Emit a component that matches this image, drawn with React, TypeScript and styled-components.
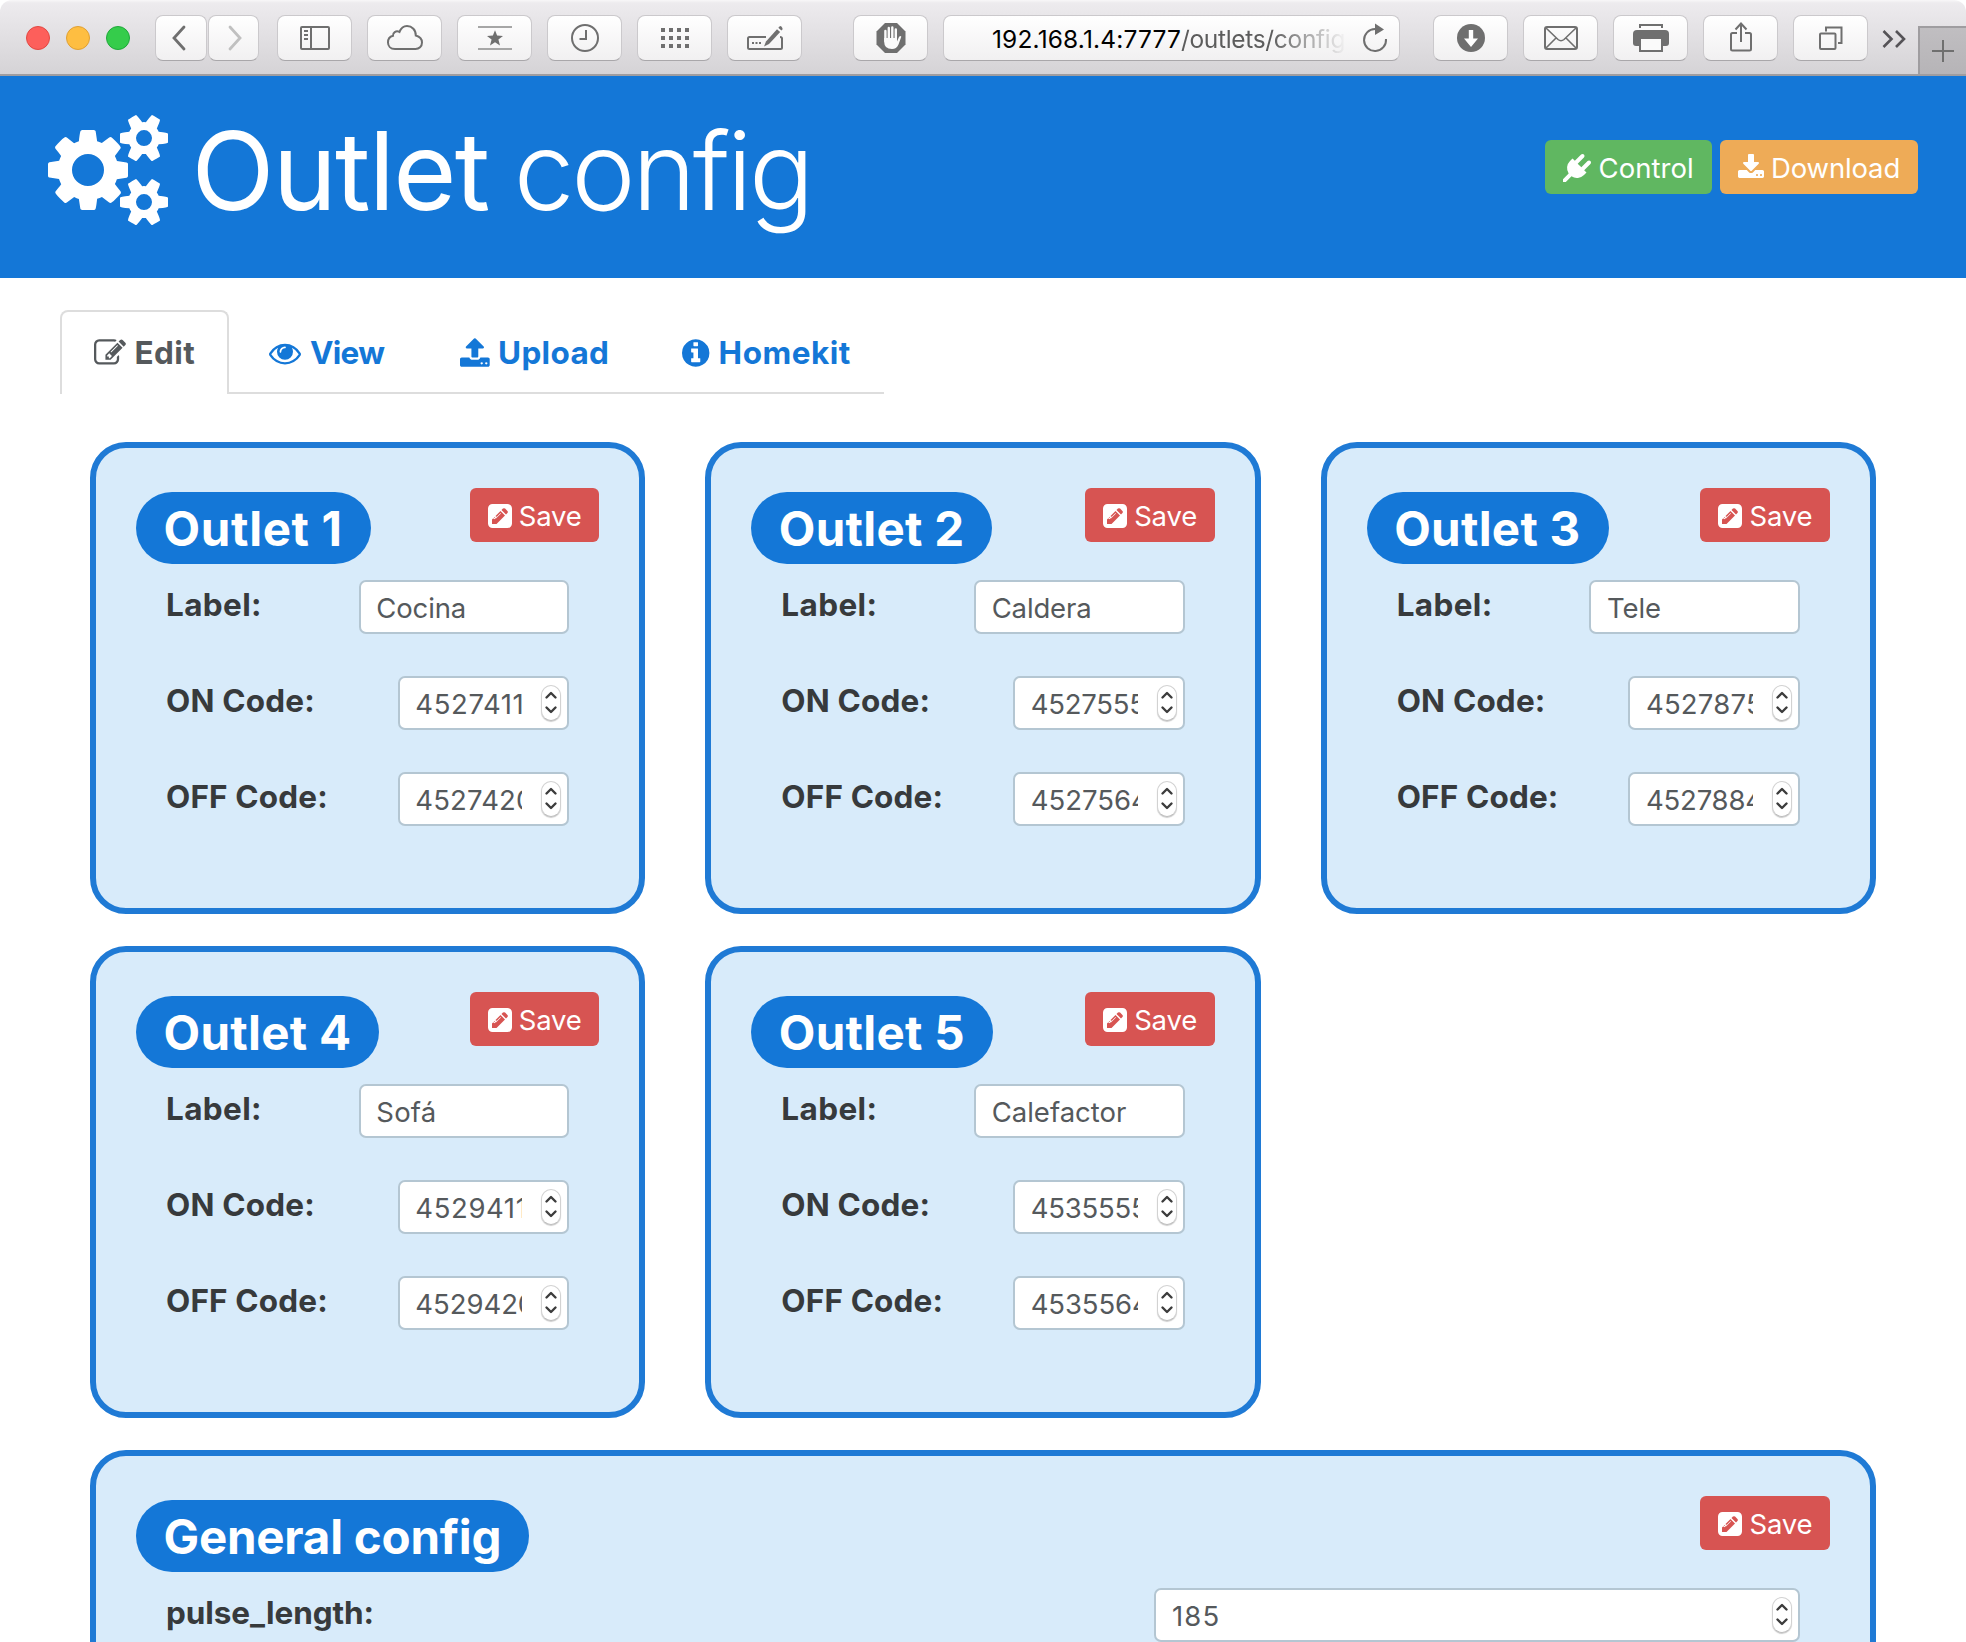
import React from 'react';
import styled, { createGlobalStyle, css } from 'styled-components';

const blue = '#1477d7';
const ink = '#373a3c';
const grey = '#6f6f6f';

const GlobalStyle = createGlobalStyle`
  *, *::before, *::after { box-sizing: border-box; }
  body {
    margin: 0;
    background: #fff;
    color: ${ink};
    font-family: Inter, "Open Sans", "Liberation Sans", sans-serif;
  }
`;

const Window = styled.div`
  width: 1966px;
  height: 1642px;
  overflow: hidden;
  background: #fff;
`;

/* ---------- Browser toolbar ---------- */

const Toolbar = styled.div`
  display: flex;
  align-items: flex-start;
  height: 76px;
  padding: 15px 0 0 26px;
  border-bottom: 2px solid #9f9da0;
  border-radius: 12px 12px 0 0;
  background: linear-gradient(#f8f7f8 0, #edebee 3px, #d5d3d6 100%);
`;

const Lights = styled.div`
  display: flex;
  gap: 16px;
  padding-top: 11px;
`;

const Light = styled.span<{ $fill: string; $edge: string }>`
  width: 24px;
  height: 24px;
  border-radius: 50%;
  border: 1px solid ${(p) => p.$edge};
  background: ${(p) => p.$fill};
`;

const Group = styled.div<{ $before: number; $gap?: number }>`
  display: flex;
  gap: ${(p) => p.$gap ?? 15}px;
  margin-left: ${(p) => p.$before}px;
`;

const chromeFace = css`
  height: 46px;
  border: 1px solid #cbc9cc;
  border-bottom-color: #a9a7aa;
  border-radius: 8px;
  background: linear-gradient(#ffffff, #f1f0f1);
`;

const ToolButton = styled.button<{ $width?: number }>`
  ${chromeFace}
  display: flex;
  align-items: center;
  justify-content: center;
  width: ${(p) => p.$width ?? 75}px;
  padding: 0;
`;

const Glyph = styled.svg`
  flex: none;
  display: block;
  width: 44px;
  height: 36px;
  fill: none;
  stroke: ${grey};
  stroke-width: 2;
`;

const AddressBar = styled.div`
  ${chromeFace}
  display: flex;
  width: 457px;
  margin-left: 15px;
  padding: 1px 2px 0 48px;
  font-size: 24.5px;
  line-height: 44px;
  white-space: nowrap;
`;

const Host = styled.span`
  color: #000;
  letter-spacing: 0.15px;
`;

const Path = styled.span`
  width: 166px;
  overflow: hidden;
  color: #5c5c5c;
  letter-spacing: -0.32px;
  mask-image: linear-gradient(to right, #000 90px, transparent 100%);
`;

const Reload = styled(Glyph)`
  margin: 3px 0 0 auto;
`;

const Overflow = styled.svg`
  display: block;
  width: 26px;
  height: 46px;
  margin-left: 13px;
  fill: none;
  stroke: #555357;
  stroke-width: 2.6;
`;

const NewTab = styled.button`
  display: flex;
  align-items: center;
  justify-content: center;
  align-self: flex-end;
  width: 48px;
  height: 48px;
  margin-left: auto;
  padding: 0;
  border: 2px solid #9f9da0;
  border-width: 2px 0 0 2px;
  background: linear-gradient(#c0bec1, #b6b4b7);
`;

/* ---------- Page header ---------- */

const Banner = styled.header`
  display: flex;
  justify-content: space-between;
  height: 202px;
  padding: 30px 48px 0;
  background: ${blue};
  color: #fff;
`;

const Title = styled.h1`
  margin: 0;
  font-size: 108.5px;
  line-height: 129px;
  font-weight: 430;
  letter-spacing: -1.8px;
  white-space: nowrap;
`;

const TitleLight = styled.span`
  margin-left: 25.5px;
  font-weight: 320;
  letter-spacing: -3.3px;
`;

const Actions = styled.div`
  display: flex;
  gap: 8px;
  padding-top: 34px;
`;

const Button = styled.button<{ $color: string; $width: number; $track?: number }>`
  flex: none;
  width: ${(p) => p.$width}px;
  height: 54px;
  padding: 3px 0 0 18px;
  border: 0;
  border-radius: 6px;
  background: ${(p) => p.$color};
  color: #fff;
  font: 430 27.5px/51px Inter, sans-serif;
  letter-spacing: ${(p) => p.$track ?? -0.2}px;
  text-align: left;
  white-space: nowrap;
`;

const FaSvg = styled.svg<{ $size: number; $advance: number; $after: number }>`
  display: inline-block;
  width: ${(p) => (p.$size * p.$advance) / 1792}px;
  height: ${(p) => p.$size}px;
  margin-right: ${(p) => p.$after}px;
  vertical-align: ${(p) => -p.$size / 7}px;
  fill: currentColor;
  overflow: visible;
`;

/* ---------- Tabs ---------- */

const TabBar = styled.nav`
  display: flex;
  gap: 6.4px;
  width: 824px;
  height: 84px;
  margin: 32px 0 0 60px;
  border-bottom: 2px solid #ddd;
`;

const Tab = styled.a<{ $width: number; $track: number; $active?: boolean }>`
  flex: none;
  width: ${(p) => p.$width}px;
  height: 84px;
  padding: 17px 0 0 32px;
  border: 2px solid transparent;
  border-bottom: 0;
  border-radius: 8px 8px 0 0;
  color: ${blue};
  font-size: 31.5px;
  line-height: 48px;
  font-weight: 700;
  letter-spacing: ${(p) => p.$track}px;
  white-space: nowrap;
  ${(p) =>
    p.$active &&
    css`
      border-color: #ddd;
      background: #fff;
      color: #55595c;
    `}
`;

/* ---------- Cards ---------- */

const Cards = styled.main`
  display: grid;
  grid-template-columns: repeat(3, 1fr);
  grid-auto-rows: 472px;
  gap: 32px 60px;
  padding: 48px 90px 0;
`;

const Card = styled.section<{ $wide?: boolean }>`
  grid-column: ${(p) => (p.$wide ? '1 / -1' : 'auto')};
  padding: 40px;
  border: 6px solid #1f7ad5;
  border-radius: 36px;
  background: #d8ebfa;
`;

const CardHead = styled.div`
  display: flex;
  justify-content: space-between;
  align-items: flex-start;
  height: 92px;
`;

const Pill = styled.h2<{ $track: number }>`
  height: 72px;
  margin: 4px 0 0;
  padding: 2px 28px 0 27.5px;
  border-radius: 36px;
  background: ${blue};
  color: #fff;
  font-size: 47.5px;
  line-height: 70px;
  font-weight: 700;
  letter-spacing: ${(p) => p.$track}px;
  white-space: nowrap;
`;

const FieldRow = styled.div`
  display: flex;
  justify-content: space-between;
  height: 96px;
  padding: 0 30px;
`;

const FieldName = styled.label<{ $track: number }>`
  font-size: 31.5px;
  line-height: 50px;
  font-weight: 700;
  letter-spacing: ${(p) => p.$track}px;
`;

const Box = styled.div<{ $width: number }>`
  display: flex;
  width: ${(p) => p.$width}px;
  height: 54px;
  padding: 0 6px 0 15.5px;
  border: 2px solid #b4c6d2;
  border-radius: 7px;
  background: #fff;
`;

const Value = styled.span<{ $track: number }>`
  flex: 1;
  min-width: 0;
  padding-top: 3px;
  overflow: hidden;
  color: #55595c;
  font-size: 27.5px;
  line-height: 47px;
  letter-spacing: ${(p) => p.$track}px;
  white-space: nowrap;
`;

const Stepper = styled.span`
  flex: none;
  width: 20px;
  height: 36px;
  margin: 7px 0 0 19px;
  border: 1px solid #d2d2d2;
  border-bottom-color: #bdbdbd;
  border-radius: 10px;
  background: #fff;
  box-shadow: 0 1px 1px rgba(0, 0, 0, 0.2);
`;

const StepperArrows = styled.svg`
  display: block;
  width: 18px;
  height: 34px;
  fill: none;
  stroke: #3c3c3c;
  stroke-width: 2.4;
  stroke-linecap: round;
  stroke-linejoin: round;
`;

/* ---------- Icon shapes ---------- */

const shapes = {
  cogs: {
    advance: 1920,
    d: 'M896 896q0-106-75-181t-181-75-181 75-75 181 75 181 181 75 181-75 75-181zm768 512q0-52-38-90t-90-38-90 38-38 90q0 53 37.5 90.5t90.5 37.5 90.5-37.5 37.5-90.5zm0-1024q0-52-38-90t-90-38-90 38-38 90q0 53 37.5 90.5t90.5 37.5 90.5-37.5 37.5-90.5zm-384 421v185q0 10-7 19.5t-16 10.5l-155 24q-11 35-32 76 34 48 90 115 7 11 7 20 0 12-7 19-23 30-82.5 89.5t-78.5 59.5q-11 0-21-7l-115-90q-37 19-77 31-11 108-23 155-7 24-30 24h-186q-11 0-20-7.5t-10-17.5l-23-153q-34-10-75-31l-118 89q-7 7-20 7-11 0-21-8-144-133-144-160 0-9 7-19 10-14 41-53t47-61q-23-44-35-82l-152-24q-10-1-17-9.5t-7-19.5v-185q0-10 7-19.5t16-10.5l155-24q11-35 32-76-34-48-90-115-7-11-7-20 0-12 7-20 22-30 82-89t79-59q11 0 21 7l115 90q34-18 77-32 11-108 23-154 7-24 30-24h186q11 0 20 7.5t10 17.5l23 153q34 10 75 31l118-89q8-7 20-7 11 0 21 8 144 133 144 160 0 8-7 19-12 16-42 54t-45 60q23 48 34 82l152 23q10 2 17 10.5t7 19.5zm640 533v140q0 16-149 31-12 27-30 52 51 113 51 138 0 4-4 7-122 71-124 71-8 0-46-47t-52-68q-20 2-30 2t-30-2q-14 21-52 68t-46 47q-2 0-124-71-4-3-4-7 0-25 51-138-18-25-30-52-149-15-149-31v-140q0-16 149-31 13-29 30-52-51-113-51-138 0-4 4-7 4-2 35-20t59-34 30-16q8 0 46 46.5t52 67.5q20-2 30-2t30 2q51-71 92-112l6-2q4 0 124 70 4 3 4 7 0 25-51 138 17 23 30 52 149 15 149 31zm0-1024v140q0 16-149 31-12 27-30 52 51 113 51 138 0 4-4 7-122 71-124 71-8 0-46-47t-52-68q-20 2-30 2t-30-2q-14 21-52 68t-46 47q-2 0-124-71-4-3-4-7 0-25 51-138-18-25-30-52-149-15-149-31v-140q0-16 149-31 13-29 30-52-51-113-51-138 0-4 4-7 4-2 35-20t59-34 30-16q8 0 46 46.5t52 67.5q20-2 30-2t30 2q51-71 92-112l6-2q4 0 124 70 4 3 4 7 0 25-51 138 17 23 30 52 149 15 149 31z',
  },
  plug: {
    advance: 1792,
    d: 'M1755 453q37 38 37 90.5t-37 90.5l-401 400 150 150-160 160q-163 163-389.5 186.5t-411.5-100.5l-362 362h-181v-181l362-362q-124-185-100.5-411.5t186.5-389.5l160-160 150 150 400-401q38-37 91-37t90 37 37 90.5-37 90.5l-400 401 234 234 401-400q38-37 91-37t90 37z',
  },
  download: {
    advance: 1664,
    d: 'M1280 1344q0-26-19-45t-45-19-45 19-19 45 19 45 45 19 45-19 19-45zm256 0q0-26-19-45t-45-19-45 19-19 45 19 45 45 19 45-19 19-45zm128-224v320q0 40-28 68t-68 28h-1472q-40 0-68-28t-28-68v-320q0-40 28-68t68-28h465l135 136q58 56 136 56t136-56l136-136h464q40 0 68 28t28 68zm-325-569q17 41-14 70l-448 448q-18 19-45 19t-45-19l-448-448q-31-29-14-70 17-39 59-39h256v-448q0-26 19-45t45-19h256q26 0 45 19t19 45v448h256q42 0 59 39z',
  },
  upload: {
    advance: 1664,
    d: 'M1280 1472q0-26-19-45t-45-19-45 19-19 45 19 45 45 19 45-19 19-45zm256 0q0-26-19-45t-45-19-45 19-19 45 19 45 45 19 45-19 19-45zm128-224v320q0 40-28 68t-68 28h-1472q-40 0-68-28t-28-68v-320q0-40 28-68t68-28h427q21 56 70.5 92t110.5 36h256q61 0 110.5-36t70.5-92h427q40 0 68 28t28 68zm-325-648q-17 40-59 40h-256v448q0 26-19 45t-45 19h-256q-26 0-45-19t-19-45v-448h-256q-42 0-59-40-17-39 14-69l448-448q18-19 45-19t45 19l448 448q31 30 14 69z',
  },
  edit: {
    advance: 1792,
    d: 'M888 1184l116-116-152-152-116 116v56h96v96h56zm440-720q-16-16-33 1l-350 350q-17 17-1 33t33-1l350-350q17-17 1-33zm80 594v190q0 119-84.5 203.5t-203.5 84.5h-832q-119 0-203.5-84.5t-84.5-203.5v-832q0-119 84.5-203.5t203.5-84.5h832q63 0 117 25 15 7 18 23 3 17-9 29l-49 49q-14 14-32 8-23-6-45-6h-832q-66 0-113 47t-47 113v832q0 66 47 113t113 47h832q66 0 113-47t47-113v-126q0-13 9-22l64-64q15-15 35-7t20 29zm-96-738l288 288-672 672h-288v-288zm444 132l-92 92-288-288 92-92q28-28 68-28t68 28l152 152q28 28 28 68t-28 68z',
  },
  eye: {
    advance: 1792,
    d: 'M1664 960q-152-236-381-353 61 104 61 225 0 185-131.5 316.5t-316.5 131.5-316.5-131.5-131.5-316.5q0-121 61-225-229 117-381 353 133 205 333.5 326.5t434.5 121.5 434.5-121.5 333.5-326.5zm-720-384q0-20-14-34t-34-14q-125 0-214.5 89.5t-89.5 214.5q0 20 14 34t34 14 34-14 14-34q0-86 61-147t147-61q20 0 34-14t14-34zm848 384q0 34-20 69-140 230-376.5 368.5t-499.5 138.5-499.5-139-376.5-368q-20-35-20-69t20-69q140-229 376.5-368t499.5-139 499.5 139 376.5 368q20 35 20 69z',
  },
  info: {
    advance: 1536,
    d: 'M1024 1376v-160q0-14-9-23t-23-9h-96v-512q0-14-9-23t-23-9h-320q-14 0-23 9t-9 23v160q0 14 9 23t23 9h96v320h-96q-14 0-23 9t-9 23v160q0 14 9 23t23 9h448q14 0 23-9t9-23zm-128-896v-160q0-14-9-23t-23-9h-192q-14 0-23 9t-9 23v160q0 14 9 23t23 9h192q14 0 23-9t9-23zm640 416q0 209-103 385.5t-279.5 279.5-385.5 103-385.5-103-279.5-279.5-103-385.5 103-385.5 279.5-279.5 385.5-103 385.5 103 279.5 279.5 103 385.5z',
  },
  pencilSquare: {
    advance: 1536,
    flip: true,
    d: 'M404 428l152 152l-52 52h-56v-96h-96v-56zM818 818q14 -13 -3 -30l-291 -291q-17 -17 -30 -3q-14 13 3 30l291 291q17 17 30 3zM544 128l544 544l-288 288l-544 -544v-288h288zM1152 736l92 92q28 28 28 68t-28 68l-152 152q-28 28 -68 28t-68 -28l-92 -92zM1536 1120v-960q0 -119 -84.5 -203.5t-203.5 -84.5h-960q-119 0 -203.5 84.5t-84.5 203.5v960q0 119 84.5 203.5t203.5 84.5h960q119 0 203.5 -84.5t84.5 -203.5z',
  },
};

type IconProps = { name: keyof typeof shapes; size: number; after: number };

function Fa({ name, size, after }: IconProps) {
  const shape: { advance: number; d: string; flip?: boolean } = shapes[name];
  return (
    <FaSvg $size={size} $advance={shape.advance} $after={after} viewBox={`0 0 ${shape.advance} 1792`} aria-hidden>
      <path d={shape.d} fillRule="evenodd" transform={shape.flip ? 'translate(0 1536) scale(1 -1)' : undefined} />
    </FaSvg>
  );
}

/* Toolbar glyphs are drawn around the centre of their button. */
const frame = '-22 -18 44 36';

const toolGlyphs: Record<string, React.ReactNode> = {
  sidebar: (
    <>
      <rect x="-14" y="-11" width="28" height="22" rx="1" />
      <path d="M-4-11V11" />
      <path d="M-11-7h4M-11-3h4M-11 1h4" strokeWidth="1.8" />
    </>
  ),
  cloud: (
    <path d="M-10 11C-14.500 11-17 8-17 4.500C-17 1-15-1.500-12-2.200C-12.500-5-9-8-5.500-6C-4-10 -1-12 2-12C7-12 11-8 10.800-2.500C14.500-1.500 17 1 17 4.500C17 8.500 14 11 10.500 11Z" />
  ),
  favourites: (
    <>
      <path d="M-17-11H17M-17 11H17" stroke="#a6a6a6" />
      <path
        d="M0-7.800L2.100-2.400L8-2.100L3.400 1.500L5 7.600L0 4.200L-5 7.600L-3.400 1.500L-8-2.100L-2.100-2.400Z"
        fill={grey}
        stroke="none"
      />
    </>
  ),
  history: (
    <>
      <circle r="13" />
      <path d="M1-8V1H-5.500" />
    </>
  ),
  grid: (
    <g fill={grey} stroke="none">
      {[-10, -2, 6].map((y) => [-14, -6, 2, 10].map((x) => <rect key={`${x} ${y}`} x={x} y={y} width="4" height="4" />))}
    </g>
  ),
  compose: (
    <>
      <path d="M1-1H-15.500Q-17-1-17 .500V9.500Q-17 11-15.500 11H15.500Q17 11 17 9.500V.500Q17-1 15-1" />
      <path d="M-13 5h2M-9.500 5h2M-6 5h2" />
      <path d="M-1 8.500L1 3.500L12-8.800L15.200-6L4 6Z" fill={grey} stroke="none" />
      <path d="M13.300-10.200L14.600-11.600Q15.600-12.300 16.600-11.300T17.600-8.800L16.400-7.400Z" fill={grey} stroke="none" />
    </>
  ),
  block: (
    <>
      <path d="M-6-15H6L14.500-6.500V6.500L6 15H-6L-14.500 6.500V-6.500Z" fill={grey} stroke="none" />
      <path d="M-5.600-7V3M-2.200-10V2M1.300-10.500V2M4.800-8.500V3" stroke="#fafafa" strokeWidth="2.400" strokeLinecap="round" />
      <path
        d="M-6.800 0H6V3.500L8-1Q9.500-2.800 10.300-1.300L7.500 6.500Q5.500 11 1 11Q-6.800 11-6.800 4Z"
        fill="#fafafa"
        stroke="none"
      />
    </>
  ),
  download: (
    <>
      <circle r="14" fill={grey} stroke="none" />
      <path d="M-2.200-8H2.200V.500H7L0 9L-7 .500H-2.200Z" fill="#fff" stroke="none" />
    </>
  ),
  mail: (
    <>
      <rect x="-16" y="-11" width="32" height="22" rx="2" />
      <path d="M-15-10L-3 1.500Q0 4 3 1.500L15-10M-15 10L-5 0M15 10L5 0" strokeWidth="1.600" />
    </>
  ),
  print: (
    <>
      <path d="M-11-10V-13H11V-10" />
      <path d="M-14-8H14Q18-8 18-4V5Q18 8 15 8H-15Q-18 8-18 5V-4Q-18-8-14-8Z" fill={grey} stroke="none" />
      <rect x="-11" y="0" width="22" height="13" fill="#fafafa" />
    </>
  ),
  share: (
    <>
      <path d="M-4-5H-8.500Q-10-5-10-3.500V11Q-10 12.500-8.500 12.500H8.500Q10 12.500 10 11V-3.500Q10-5 8.500-5H4" />
      <path d="M0 4V-14M-5.500-8.500L0-14.500L5.500-8.500" />
    </>
  ),
  tabs: (
    <>
      <rect x="-11" y="-4.500" width="15.500" height="15.500" rx="1" />
      <path d="M-5-6.500V-10.500H10.500V5H7" />
    </>
  ),
};

function ToolIcon({ name }: { name: string }) {
  return (
    <ToolButton aria-label={name}>
      <Glyph viewBox={frame}>{toolGlyphs[name]}</Glyph>
    </ToolButton>
  );
}

function BrowserToolbar() {
  return (
    <Toolbar>
      <Lights>
        <Light $fill="#fd5f5b" $edge="#e24842" />
        <Light $fill="#febe41" $edge="#e0a033" />
        <Light $fill="#35cc4b" $edge="#1fa83a" />
      </Lights>
      <Group $before={25} $gap={1}>
        <ToolButton $width={52} aria-label="back">
          <Glyph viewBox={frame}>
            <path d="M3-11L-7 0L3 11" strokeWidth="2.800" strokeLinecap="round" />
          </Glyph>
        </ToolButton>
        <ToolButton $width={51} aria-label="forward">
          <Glyph viewBox={frame}>
            <path d="M-4-11L6 0L-4 11" stroke="#c0c0c0" strokeWidth="2.800" strokeLinecap="round" />
          </Glyph>
        </ToolButton>
      </Group>
      <Group $before={18}>
        {['sidebar', 'cloud', 'favourites', 'history', 'grid', 'compose'].map((name) => (
          <ToolIcon key={name} name={name} />
        ))}
      </Group>
      <Group $before={51}>
        <ToolIcon name="block" />
      </Group>
      <AddressBar>
        <Host>192.168.1.4:7777</Host>
        <Path>/outlets/config</Path>
        <Reload viewBox={frame}>
          <path d="M11 1A11 11 0 1 1 0-9" />
          <path d="M0-14.500L9-8.500L0-3Z" fill={grey} stroke="none" />
        </Reload>
      </AddressBar>
      <Group $before={33}>
        {['download', 'mail', 'print', 'share', 'tabs'].map((name) => (
          <ToolIcon key={name} name={name} />
        ))}
      </Group>
      <Overflow viewBox="0 0 26 46">
        <path d="M2.500 16L10.500 24L2.500 32M15 16L23 24L15 32" />
      </Overflow>
      <NewTab aria-label="new tab">
        <Glyph viewBox={frame}>
          <path d="M-11 0H11M0-11V11" />
        </Glyph>
      </NewTab>
    </Toolbar>
  );
}

/* ---------- Page content ---------- */

type Entry = [text: string, track: number];
type Field = { name: Entry; value: Entry; numeric?: boolean };
type CardData = { title: Entry; fields: Field[] };

const outlet = (title: Entry, label: Entry, on: Entry, off: Entry): CardData => ({
  title,
  fields: [
    { name: ['Label:', 0.37], value: label },
    { name: ['ON Code:', 0.17], value: on, numeric: true },
    { name: ['OFF Code:', 0.15], value: off, numeric: true },
  ],
});

const outlets = [
  outlet(['Outlet 1', 0.65], ['Cocina', -0.15], ['4527411', 0.6], ['4527420', 0.15]),
  outlet(['Outlet 2', 0.28], ['Caldera', -0.15], ['4527555', -0.25], ['4527564', 0]),
  outlet(['Outlet 3', 0.28], ['Tele', -0.1], ['4527875', 0.2], ['4527884', -0.2]),
  outlet(['Outlet 4', 0.28], ['Sofá', 0.2], ['4529411', 0.6], ['4529420', -0.05]),
  outlet(['Outlet 5', 0.28], ['Calefactor', 0], ['4535555', -0.2], ['4535564', -0.1]),
];

const general: CardData = {
  title: ['General config', -0.24],
  fields: [{ name: ['pulse_length:', -0.08], value: ['185', 1.1], numeric: true }],
};

function ConfigCard({ card, wide }: { card: CardData; wide?: boolean }) {
  return (
    <Card $wide={wide}>
      <CardHead>
        <Pill $track={card.title[1]}>{card.title[0]}</Pill>
        <Button $color="#d75452" $width={129.5}>
          <Fa name="pencilSquare" size={28} after={7} />
          Save
        </Button>
      </CardHead>
      {card.fields.map(({ name, value, numeric }) => (
        <FieldRow key={name[0]}>
          <FieldName $track={name[1]}>{name[0]}</FieldName>
          <Box $width={wide ? 645.5 : numeric ? 171.5 : 210.5}>
            <Value $track={value[1]}>{value[0]}</Value>
            {numeric && (
              <Stepper>
                <StepperArrows viewBox="0 0 18 34">
                  <path d="M4.500 11.500L9 7L13.500 11.500M4.500 21.500L9 26L13.500 21.500" />
                </StepperArrows>
              </Stepper>
            )}
          </Box>
        </FieldRow>
      ))}
    </Card>
  );
}

export default function App() {
  return (
    <Window>
      <GlobalStyle />
      <BrowserToolbar />
      <Banner>
        <Title>
          <Fa name="cogs" size={112} after={23.5} />
          Outlet
          <TitleLight>config</TitleLight>
        </Title>
        <Actions>
          <Button $color="#60b761" $width={167} $track={0.05}>
            <Fa name="plug" size={28} after={7.5} />
            Control
          </Button>
          <Button $color="#eeab57" $width={198} $track={-0.15}>
            <Fa name="download" size={28} after={7} />
            Download
          </Button>
        </Actions>
      </Banner>
      <TabBar>
        <Tab $width={169} $track={0.4} $active>
          <Fa name="edit" size={32} after={8.5} />
          Edit
        </Tab>
        <Tab $width={184} $track={-0.7}>
          <Fa name="eye" size={32} after={8.5} />
          View
        </Tab>
        <Tab $width={216} $track={0.35}>
          <Fa name="upload" size={32} after={8.5} />
          Upload
        </Tab>
        <Tab $width={236} $track={0.5}>
          <Fa name="info" size={32} after={9} />
          Homekit
        </Tab>
      </TabBar>
      <Cards>
        {outlets.map((card) => (
          <ConfigCard key={card.title[0]} card={card} />
        ))}
        <ConfigCard card={general} wide />
      </Cards>
    </Window>
  );
}
